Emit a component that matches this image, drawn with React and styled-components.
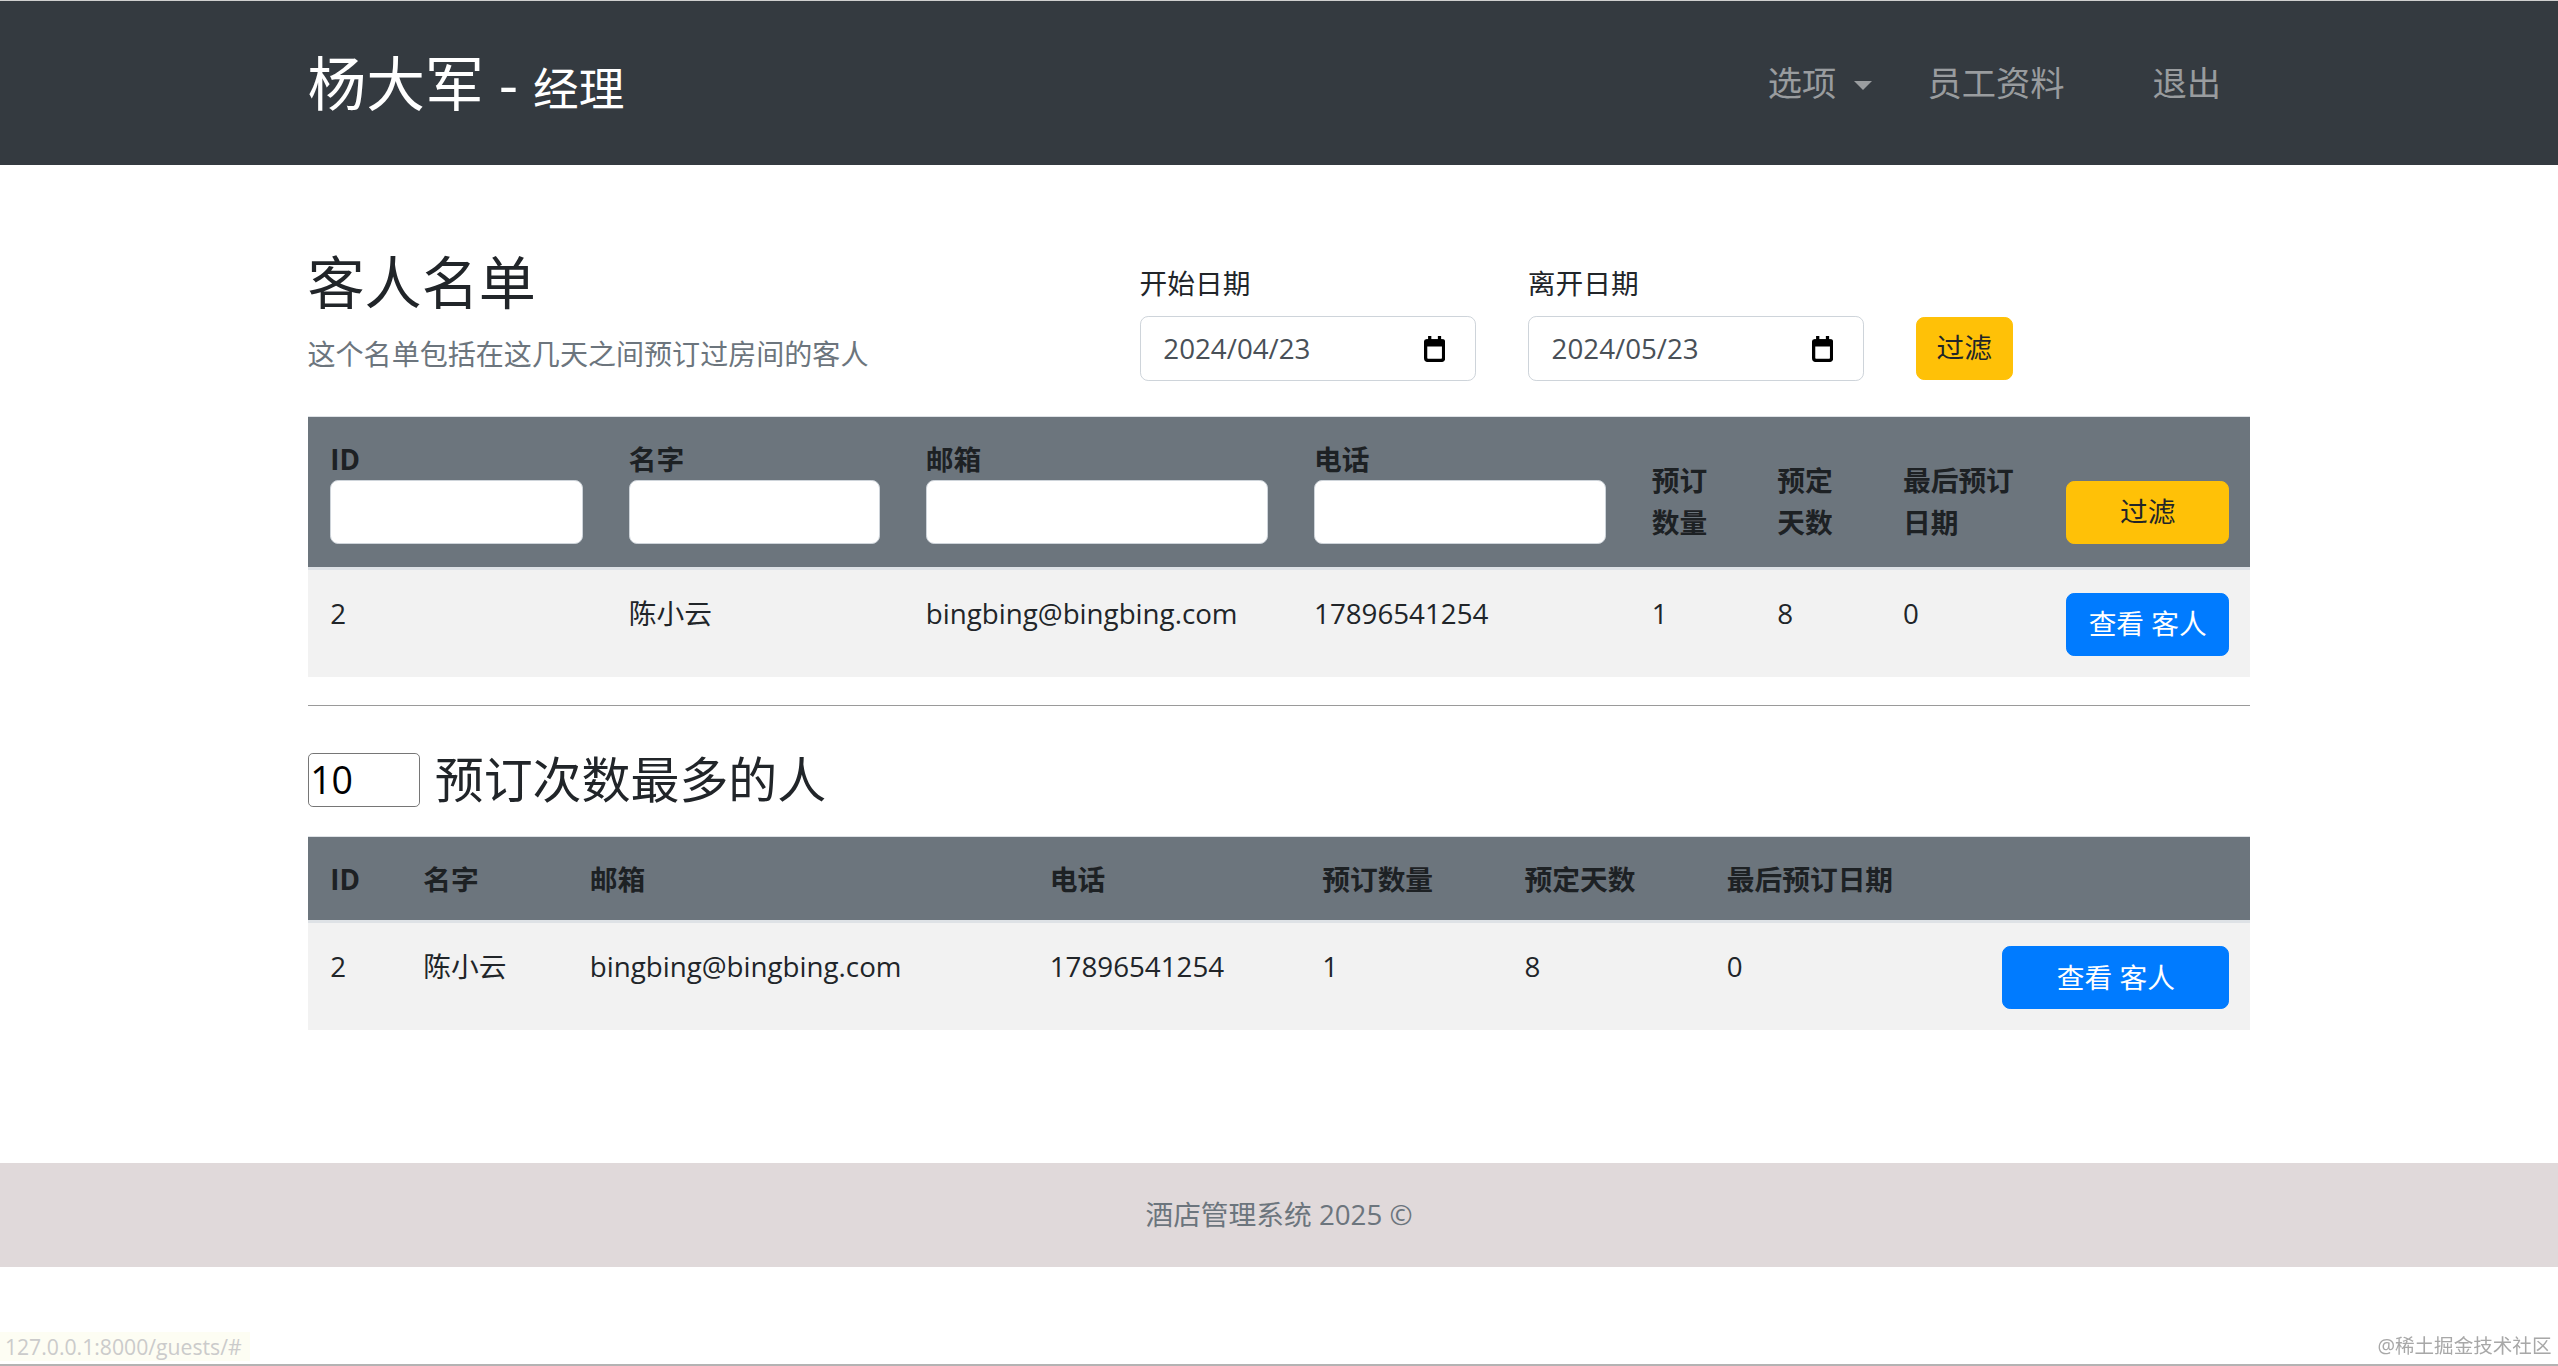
import React from "react";
import styled, { createGlobalStyle } from "styled-components";

const GlobalStyle = createGlobalStyle`
  html, body {
    margin: 0;
    padding: 0;
    background: #fff;
  }
  body {
    font-family: "Open Sans", "Noto Sans CJK SC", sans-serif;
    font-size: 17px;
    line-height: 1.5;
    color: #212529;
  }
  #root {
    zoom: 1.6314;
  }
  * {
    box-sizing: border-box;
  }
`;

const Container = styled.div`
  width: 1191px;
  margin: 0 auto;
`;

const Navbar = styled.nav`
  height: 101px;
  border-top: 1px solid #cfcfcf;
  background: #343a40;
  display: flex;
  align-items: center;
`;

const NavInner = styled(Container)`
  display: flex;
  align-items: center;
  justify-content: space-between;
`;

const Brand = styled.a`
  color: #fff;
  font-size: 36px;
  line-height: 1.2;
  text-decoration: none;
  white-space: nowrap;
`;

const BrandRole = styled.span`
  font-size: 28px;
`;

const NavList = styled.div`
  display: flex;
  align-items: center;
`;

const NavLink = styled.a`
  color: rgba(255, 255, 255, 0.5);
  font-size: 21px;
  line-height: 1.5;
  padding: 0 17px;
  text-decoration: none;
  white-space: nowrap;
  margin-left: ${(p) => p.$gap || 0}px;
  &:first-child {
    padding-left: 15px;
  }
  &:last-child {
    padding-right: 18px;
  }
`;

const Caret = styled.span`
  display: inline-block;
  margin-left: 11px;
  vertical-align: 4px;
  border-top: 6px solid;
  border-left: 6px solid transparent;
  border-right: 6px solid transparent;
`;

const Main = styled(Container)`
  padding-top: 51px;
`;

const HeadRow = styled.div`
  display: flex;
  align-items: flex-end;
`;

const TitleBlock = styled.div`
  flex: 0 0 510px;
  padding-bottom: 4px;
`;

const Title = styled.h2`
  margin: 0 0 10px;
  font-size: 35px;
  font-weight: 400;
  line-height: 1.2;
`;

const Lead = styled.div`
  color: #6c757d;
  font-size: 17.2px;
`;

const DateGroup = styled.div`
  width: 206px;
  margin-right: 32px;
`;

const DateLabel = styled.div`
  margin-bottom: 7px;
`;

const DateBox = styled.div`
  height: 40px;
  border: 1px solid #ced4da;
  border-radius: 5px;
  padding: 0 18px 0 14px;
  display: flex;
  align-items: center;
  justify-content: space-between;
  color: #495057;
`;

const Button = styled.button`
  font-family: inherit;
  font-size: 17px;
  line-height: 25.5px;
  padding: 6px 12px;
  border-radius: 5px;
  border: 1px solid ${(p) => (p.$variant === "primary" ? "#007bff" : "#ffc107")};
  background: ${(p) => (p.$variant === "primary" ? "#007bff" : "#ffc107")};
  color: ${(p) => (p.$variant === "primary" ? "#fff" : "#212529")};
  white-space: nowrap;
  width: ${(p) => (p.$block ? "100%" : "auto")};
  margin-bottom: ${(p) => (p.$block ? 0 : 1)}px;
  cursor: pointer;
`;

const Table = styled.table`
  width: 100%;
  border-collapse: collapse;
  table-layout: fixed;
  margin-top: ${(p) => p.$top}px;
`;

const Col = styled.col`
  width: ${(p) => p.$w}px;
`;

const Head = styled.thead`
  background: #6c757d;
`;

const Th = styled.th`
  text-align: left;
  vertical-align: bottom;
  font-weight: 700;
  line-height: 26px;
  padding: 13px 14px ${(p) => (p.$compact ? 12 : 14)}px 14px;
  border-top: 1px solid #dee2e6;
  border-bottom: 2px solid #dee2e6;
  color: #1d2124;
  padding-right: ${(p) => (p.$tight ? 13 : 14)}px;
`;

const FilterInput = styled.input`
  display: block;
  width: 100%;
  height: 39px;
  border: 1px solid #ced4da;
  border-radius: 5px;
  background: #fff;
  font-family: inherit;
  font-size: 17px;
  font-weight: 400;
`;

const Row = styled.tr`
  background: #f2f2f2;
`;

const Td = styled.td`
  vertical-align: top;
  padding: 14px 14px 13px 14px;
  padding-right: ${(p) => (p.$tight ? 13 : 14)}px;
  line-height: 25.5px;
  white-space: nowrap;
`;

const Rule = styled.hr`
  margin: 17px 0 0;
  border: 0;
  border-top: 1px solid #9a9a9a;
`;

const TopHeading = styled.div`
  display: flex;
  align-items: center;
  margin-top: 29px;
  height: 33px;
`;

const CountInput = styled.input`
  width: 69px;
  height: 33px;
  border: 1px solid #767676;
  border-radius: 3px;
  padding: 0 1px;
  font-family: "Open Sans", sans-serif;
  font-size: 23px;
  color: #000;
  background: #fff;
`;

const SubTitle = styled.h3`
  margin: 0 0 0 9px;
  font-size: 30px;
  font-weight: 400;
  line-height: 33px;
`;

const Footer = styled.footer`
  margin-top: 81px;
  height: 64px;
  background: #e0d9da;
  color: #6c757d;
  display: flex;
  align-items: center;
  justify-content: center;
`;

const StatusHint = styled.div`
  position: fixed;
  left: 0;
  bottom: 3px;
  padding: 0 5px 0 3px;
  background: #fdfdf3;
  color: #cbcbcb;
  font-size: 13px;
  line-height: 18px;
`;

const Watermark = styled.div`
  position: fixed;
  right: 4px;
  bottom: 4px;
  color: #a8a8a8;
  font-size: 12px;
  line-height: 16px;
`;

const BottomEdge = styled.div`
  position: fixed;
  left: 0;
  right: 0;
  bottom: 0;
  height: 1.5px;
  background: #b3b3b3;
`;

function CalendarIcon() {
  return (
    <svg width="13" height="16" viewBox="0 0 13 16" aria-hidden="true">
      <rect x="2.5" y="0" width="2" height="3" fill="#000" />
      <rect x="8.5" y="0" width="2" height="3" fill="#000" />
      <rect x="0" y="2" width="13" height="4.5" rx="1.5" fill="#000" />
      <rect x="1" y="3" width="11" height="12" rx="1.5" fill="none" stroke="#000" strokeWidth="2" />
    </svg>
  );
}

function DateField({ label, value }) {
  return (
    <DateGroup>
      <DateLabel>{label}</DateLabel>
      <DateBox>
        <span>{value}</span>
        <CalendarIcon />
      </DateBox>
    </DateGroup>
  );
}

const guest = {
  id: 2,
  name: "陈小云",
  email: "bingbing@bingbing.com",
  phone: "17896541254",
  bookings: 1,
  days: 8,
  last: 0,
};

function GuestRow() {
  return (
    <Row>
      <Td>{guest.id}</Td>
      <Td>{guest.name}</Td>
      <Td>{guest.email}</Td>
      <Td>{guest.phone}</Td>
      <Td>{guest.bookings}</Td>
      <Td>{guest.days}</Td>
      <Td>{guest.last}</Td>
      <Td $tight>
        <Button $variant="primary" $block>
          查看 客人
        </Button>
      </Td>
    </Row>
  );
}

function GuestTable() {
  return (
    <Table $top={21}>
      <colgroup>
        {[183, 182, 238, 207, 77, 77, 100, 127].map((w, i) => (
          <Col key={i} $w={w} />
        ))}
      </colgroup>
      <Head>
        <tr>
          <Th>
            ID
            <FilterInput />
          </Th>
          <Th>
            名字
            <FilterInput />
          </Th>
          <Th>
            邮箱
            <FilterInput />
          </Th>
          <Th>
            电话
            <FilterInput />
          </Th>
          <Th>预订数量</Th>
          <Th>预定天数</Th>
          <Th>最后预订日期</Th>
          <Th $tight>
            <Button $block>过滤</Button>
          </Th>
        </tr>
      </Head>
      <tbody>
        <GuestRow />
      </tbody>
    </Table>
  );
}

function TopGuestTable() {
  const heads = ["ID", "名字", "邮箱", "电话", "预订数量", "预定天数", "最后预订日期"];
  return (
    <Table $top={18}>
      <colgroup>
        {[57, 102, 282, 167, 124, 124, 169, 166].map((w, i) => (
          <Col key={i} $w={w} />
        ))}
      </colgroup>
      <Head>
        <tr>
          {heads.map((h) => (
            <Th key={h} $compact>
              {h}
            </Th>
          ))}
          <Th $compact $tight></Th>
        </tr>
      </Head>
      <tbody>
        <GuestRow />
      </tbody>
    </Table>
  );
}

export default function App() {
  return (
    <>
      <GlobalStyle />
      <Navbar>
        <NavInner>
          <Brand href="#">
            杨大军 - <BrandRole>经理</BrandRole>
          </Brand>
          <NavList>
            <NavLink href="#">
              选项
              <Caret />
            </NavLink>
            <NavLink href="#">员工资料</NavLink>
            <NavLink href="#" $gap={20}>
              退出
            </NavLink>
          </NavList>
        </NavInner>
      </Navbar>

      <Main>
        <HeadRow>
          <TitleBlock>
            <Title>客人名单</Title>
            <Lead>这个名单包括在这几天之间预订过房间的客人</Lead>
          </TitleBlock>
          <DateField label="开始日期" value="2024/04/23" />
          <DateField label="离开日期" value="2024/05/23" />
          <Button>过滤</Button>
        </HeadRow>

        <GuestTable />

        <Rule />

        <TopHeading>
          <CountInput type="number" defaultValue={10} />
          <SubTitle>预订次数最多的人</SubTitle>
        </TopHeading>

        <TopGuestTable />
      </Main>

      <Footer>酒店管理系统 2025 ©</Footer>

      <StatusHint>127.0.0.1:8000/guests/#</StatusHint>
      <Watermark>@稀土掘金技术社区</Watermark>
      <BottomEdge />
    </>
  );
}
